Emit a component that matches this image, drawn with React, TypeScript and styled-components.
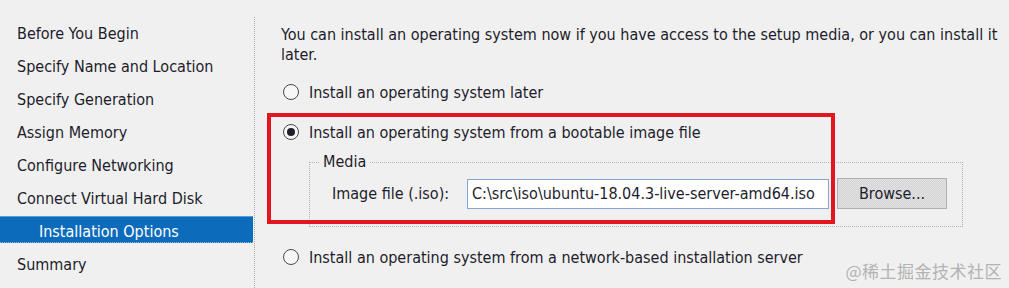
import styled, { createGlobalStyle } from "styled-components";

const GlobalStyle = createGlobalStyle`
  html, body {
    margin: 0;
    padding: 0;
    background: #f0f0f0;
  }
`;

const StyledPage = styled.div`
  position: relative;
  display: flex;
  width: 1009px;
  height: 288px;
  overflow: hidden;
  background: #f0f0f0;
  font-family: "DejaVu Sans Condensed", "DejaVu Sans", sans-serif;
  font-size: 16px;
  color: #1d1d2b;
`;

const StyledSidebar = styled.ul`
  display: flex;
  flex-direction: column;
  gap: 6px;
  width: 253px;
  margin: 0;
  padding: 18px 0 0;
  list-style: none;
`;

const StyledNavItem = styled.li<{ $active?: boolean; $sub?: boolean }>`
  box-sizing: border-box;
  height: 27px;
  padding: 2px 0 0 ${(p) => (p.$sub ? "39px" : "17px")};
  line-height: 25px;
  white-space: nowrap;
  color: ${(p) => (p.$active ? "#fff" : "#1d1d2b")};
  background: ${(p) => (p.$active ? "#0d6bbb" : "transparent")};
  border-top: 1px solid ${(p) => (p.$active ? "#5c9bd6" : "transparent")};
  border-bottom: 1px dotted
    ${(p) => (p.$active ? "rgba(255,255,255,0.55)" : "transparent")};
`;

const StyledDivider = styled.div`
  width: 0;
  margin: 17px 0 0 1px;
  border-left: 1px dotted #a8a8a8;
`;

const StyledContent = styled.div`
  display: flex;
  flex-direction: column;
  padding: 25px 0 0 26px;
  width: 724px;
`;

const StyledIntro = styled.p`
  margin: 0;
  line-height: 20px;
  width: 724px;
`;

const StyledRadioRow = styled.label<{ $top: number }>`
  display: flex;
  align-items: center;
  gap: 10px;
  height: 20px;
  margin: ${(p) => p.$top}px 0 0 2px;
  white-space: nowrap;
`;

const StyledRadio = styled.span<{ $checked?: boolean }>`
  position: relative;
  box-sizing: border-box;
  width: 16px;
  height: 16px;
  border: 1px solid #4a4a4a;
  border-radius: 50%;
  background: #f7f7f7;

  &::after {
    content: "";
    display: ${(p) => (p.$checked ? "block" : "none")};
    position: absolute;
    left: 3px;
    top: 3px;
    width: 8px;
    height: 8px;
    border-radius: 50%;
    background: #1f1f2a;
  }
`;

const StyledFieldset = styled.fieldset`
  box-sizing: border-box;
  width: 654px;
  height: 73px;
  margin: 12px 0 0 28px;
  padding: 0;
  border: 1px dotted #b4b4b4;
  min-width: 0;
`;

const StyledLegend = styled.legend`
  margin-left: 10px;
  padding: 0 3px;
  line-height: 16px;
`;

const StyledFileRow = styled.div`
  display: flex;
  align-items: center;
  gap: 8px;
  margin-top: 8px;
  padding-left: 22px;
`;

const StyledFieldLabel = styled.span`
  width: 127px;
  white-space: nowrap;
`;

const StyledInput = styled.div`
  box-sizing: border-box;
  width: 362px;
  height: 30px;
  padding-left: 4px;
  line-height: 28px;
  background: #fff;
  border: 1px solid #86a6cf;
  white-space: nowrap;
  overflow: hidden;
`;

const StyledButton = styled.div`
  box-sizing: border-box;
  width: 110px;
  height: 31px;
  line-height: 29px;
  text-align: center;
  border: 1px solid #b0b0b0;
  background: repeating-conic-gradient(#e4e4e4 0 25%, #d2d2d2 0 50%) 0 0 / 2px
    2px;
`;

const StyledHighlight = styled.div`
  position: absolute;
  left: 267px;
  top: 113px;
  width: 568px;
  height: 111px;
  box-sizing: border-box;
  border: 4px solid #e3161f;
  pointer-events: none;
`;

const StyledWatermark = styled.div`
  position: absolute;
  right: 7px;
  bottom: 5px;
  font-family: "Noto Sans CJK SC", sans-serif;
  font-size: 17px;
  color: #b3b3b3;
  letter-spacing: 0.5px;
`;

const steps = [
  "Before You Begin",
  "Specify Name and Location",
  "Specify Generation",
  "Assign Memory",
  "Configure Networking",
  "Connect Virtual Hard Disk",
];

const App = () => (
  <>
    <GlobalStyle />
    <StyledPage>
      <StyledSidebar>
        {steps.map((s) => (
          <StyledNavItem key={s}>{s}</StyledNavItem>
        ))}
        <StyledNavItem $active $sub>
          Installation Options
        </StyledNavItem>
        <StyledNavItem>Summary</StyledNavItem>
      </StyledSidebar>
      <StyledDivider />
      <StyledContent>
        <StyledIntro>
          You can install an operating system now if you have access to the
          setup media, or you can install it later.
        </StyledIntro>
        <StyledRadioRow $top={17}>
          <StyledRadio />
          Install an operating system later
        </StyledRadioRow>
        <StyledRadioRow $top={20}>
          <StyledRadio $checked />
          Install an operating system from a bootable image file
        </StyledRadioRow>
        <StyledFieldset>
          <StyledLegend>Media</StyledLegend>
          <StyledFileRow>
            <StyledFieldLabel>Image file (.iso):</StyledFieldLabel>
            <StyledInput>C:\src\iso\ubuntu-18.04.3-live-server-amd64.iso</StyledInput>
            <StyledButton>Browse...</StyledButton>
          </StyledFileRow>
        </StyledFieldset>
        <StyledRadioRow $top={20}>
          <StyledRadio />
          Install an operating system from a network-based installation server
        </StyledRadioRow>
      </StyledContent>
      <StyledHighlight />
      <StyledWatermark>@稀土掘金技术社区</StyledWatermark>
    </StyledPage>
  </>
);

export default App;
